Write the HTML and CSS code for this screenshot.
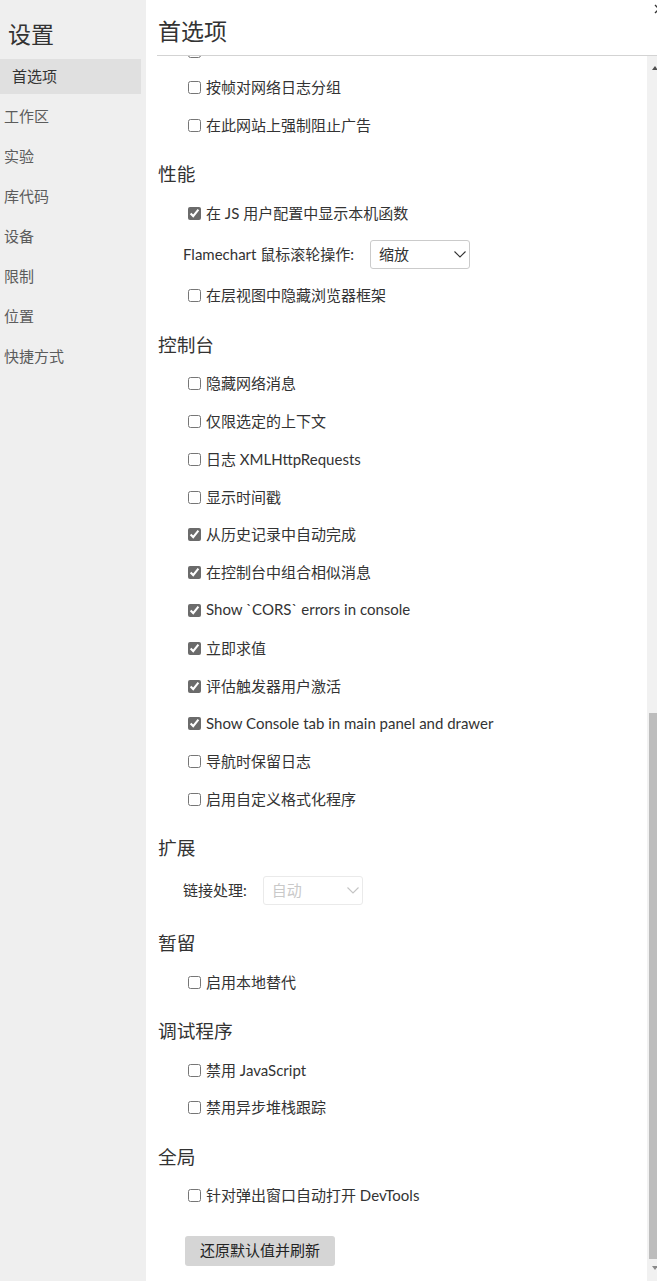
FILE: index.html
```html
<!DOCTYPE html>
<html lang="zh-CN">
<head>
<meta charset="utf-8">
<title>设置 - 首选项</title>
<link rel="stylesheet" href="styles.css">
</head>
<body>
<div class="app">
  <nav class="sidebar">
    <h1 class="sidebar-title">设置</h1>
    <ul class="nav">
      <li class="nav-item selected">首选项</li>
      <li class="nav-item">工作区</li>
      <li class="nav-item">实验</li>
      <li class="nav-item">库代码</li>
      <li class="nav-item">设备</li>
      <li class="nav-item">限制</li>
      <li class="nav-item">位置</li>
      <li class="nav-item">快捷方式</li>
    </ul>
  </nav>
  <main class="panel">
    <header class="panel-header">
      <h2 class="panel-title">首选项</h2>
      <button class="close" aria-label="关闭">
        <svg viewBox="0 0 10 10" width="10" height="10"><path d="M1 1L9 9M9 1L1 9" stroke="#333" stroke-width="1.3" fill="none"/></svg>
      </button>
    </header>
    <div class="panel-body">
      <div class="scroll">
        <div class="content">
          <section class="group">
            <label class="check-row partial"><input type="checkbox" aria-label="记录网络日志"></label>
            <label class="check-row"><input type="checkbox"><span>按帧对网络日志分组</span></label>
            <label class="check-row"><input type="checkbox"><span>在此网站上强制阻止广告</span></label>
          </section>
          <section class="group">
            <h3 class="group-title">性能</h3>
            <label class="check-row"><input type="checkbox" checked><span>在 JS 用户配置中显示本机函数</span></label>
            <div class="select-row">
              <span class="select-label">Flamechart 鼠标滚轮操作:</span>
              <span class="select">
                <select><option>缩放</option><option>滚动</option></select>
                <svg class="chevron" viewBox="0 0 12 7" width="12" height="7"><path d="M0.5 0.5L6 6L11.5 0.5" stroke="#333" stroke-width="1.1" fill="none"/></svg>
              </span>
            </div>
            <label class="check-row"><input type="checkbox"><span>在层视图中隐藏浏览器框架</span></label>
          </section>
          <section class="group">
            <h3 class="group-title">控制台</h3>
            <label class="check-row"><input type="checkbox"><span>隐藏网络消息</span></label>
            <label class="check-row"><input type="checkbox"><span>仅限选定的上下文</span></label>
            <label class="check-row"><input type="checkbox"><span>日志 XMLHttpRequests</span></label>
            <label class="check-row"><input type="checkbox"><span>显示时间戳</span></label>
            <label class="check-row"><input type="checkbox" checked><span>从历史记录中自动完成</span></label>
            <label class="check-row"><input type="checkbox" checked><span>在控制台中组合相似消息</span></label>
            <label class="check-row"><input type="checkbox" checked><span>Show `CORS` errors in console</span></label>
            <label class="check-row"><input type="checkbox" checked><span>立即求值</span></label>
            <label class="check-row"><input type="checkbox" checked><span>评估触发器用户激活</span></label>
            <label class="check-row"><input type="checkbox" checked><span>Show Console tab in main panel and drawer</span></label>
            <label class="check-row"><input type="checkbox"><span>导航时保留日志</span></label>
            <label class="check-row"><input type="checkbox"><span>启用自定义格式化程序</span></label>
          </section>
          <section class="group">
            <h3 class="group-title">扩展</h3>
            <div class="select-row">
              <span class="select-label">链接处理:</span>
              <span class="select disabled">
                <select disabled><option>自动</option></select>
                <svg class="chevron" viewBox="0 0 12 7" width="12" height="7"><path d="M0.5 0.5L6 6L11.5 0.5" stroke="#c4c4c4" stroke-width="1.1" fill="none"/></svg>
              </span>
            </div>
          </section>
          <section class="group">
            <h3 class="group-title">暂留</h3>
            <label class="check-row"><input type="checkbox"><span>启用本地替代</span></label>
          </section>
          <section class="group">
            <h3 class="group-title">调试程序</h3>
            <label class="check-row"><input type="checkbox"><span>禁用 JavaScript</span></label>
            <label class="check-row"><input type="checkbox"><span>禁用异步堆栈跟踪</span></label>
          </section>
          <section class="group">
            <h3 class="group-title">全局</h3>
            <label class="check-row"><input type="checkbox"><span>针对弹出窗口自动打开 DevTools</span></label>
          </section>
          <button class="reset">还原默认值并刷新</button>
        </div>
      </div>
      <div class="scrollbar">
        <div class="sb-button up"><span class="arrow-up"></span></div>
        <div class="sb-track"><div class="sb-thumb"></div></div>
        <div class="sb-button down"><span class="arrow-down"></span></div>
      </div>
    </div>
  </main>
</div>
</body>
</html>
```
FILE: styles.css
```css
html, body {
  margin: 0;
  padding: 0;
  height: 100%;
  overflow: hidden;
  background: #ffffff;
}

body {
  font-family: Lato, "Noto Sans CJK SC", sans-serif;
  font-size: 15px;
  color: #333333;
}

.app {
  display: flex;
  width: 662px;
  height: 1281px;
}

/* Sidebar */
.sidebar {
  flex: none;
  width: 146px;
  background: #efefef;
}

.sidebar-title {
  margin: 19px 0 10px 8px;
  font-size: 23px;
  line-height: 30px;
  font-weight: normal;
  color: #333333;
}

.nav {
  list-style: none;
  margin: 0;
  padding: 0;
}

.nav-item {
  height: 35px;
  line-height: 34px;
  margin: 0 5px 5px 0;
  padding-left: 4px;
  color: #5c5c5c;
}

.nav-item.selected {
  padding-left: 12px;
  background: #e0e0e0;
  color: #333333;
}

/* Panel */
.panel {
  flex: 1;
  display: flex;
  flex-direction: column;
  position: relative;
  min-width: 0;
}

.panel-header {
  flex: none;
  height: 55px;
  margin-left: 11px;
  padding-left: 1px;
  border-bottom: 1px solid #d3d3d3;
  box-sizing: content-box;
}

.panel-title {
  margin: 0;
  padding-top: 16px;
  font-size: 23px;
  line-height: 31px;
  font-weight: normal;
  color: #333333;
}

.close {
  position: absolute;
  top: 4px;
  right: -2px;
  width: 10px;
  height: 10px;
  padding: 0;
  border: none;
  background: none;
  display: flex;
}

.panel-body {
  flex: 1;
  display: flex;
  min-height: 0;
}

.scroll {
  flex: 1;
  overflow: hidden;
}

.content {
  margin-top: -25.2px;
}

.group-title {
  margin: 12px 0 0;
  height: 38px;
  line-height: 37px;
  padding-left: 12px;
  font-size: 18.7px;
  font-weight: normal;
  color: #333333;
}

.check-row {
  display: flex;
  align-items: center;
  height: 37.8px;
  padding-left: 42px;
  color: #333333;
}

.check-row.partial {
  margin-top: 1.5px;
  margin-bottom: -1.5px;
}

.check-row span {
  margin-bottom: 2px;
}

.check-row input {
  margin: 0 5px 0 0;
  width: 13px;
  height: 13px;
  accent-color: #6b6b6b;
  flex: none;
}

.select-row {
  display: flex;
  align-items: center;
  gap: 16px;
  padding: 8px 0 8px 37px;
}

.select-label {
  color: #333333;
  margin-bottom: 2px;
}

.select {
  position: relative;
  display: flex;
}

.select select {
  appearance: none;
  -webkit-appearance: none;
  width: 100px;
  height: 29px;
  margin: 0;
  padding: 0 8px 2px;
  border: 1px solid #cbcbcb;
  border-radius: 3px;
  background: #ffffff;
  font: inherit;
  color: #333333;
}

.select.disabled select {
  border-color: #e2e2e2;
  color: #b3b3b3;
}

.chevron {
  position: absolute;
  right: 4px;
  top: 11px;
  pointer-events: none;
}

.reset {
  display: block;
  margin: 21px 0 0 39px;
  width: 150px;
  height: 30px;
  padding: 0 0 2px;
  border: none;
  border-radius: 3px;
  background: #d5d5d5;
  font: inherit;
  color: #222222;
}

/* Scrollbar */
.scrollbar {
  flex: none;
  width: 15px;
  display: flex;
  flex-direction: column;
  background: #f1f1f1;
}

.sb-button {
  flex: none;
  height: 17px;
  display: flex;
  justify-content: center;
}

.sb-button.up {
  align-items: flex-end;
  padding-bottom: 3px;
  box-sizing: border-box;
}

.sb-button.down {
  align-items: flex-start;
  padding-top: 2px;
  box-sizing: border-box;
}

.arrow-up {
  width: 0;
  height: 0;
  border-left: 3.5px solid transparent;
  border-right: 3.5px solid transparent;
  border-bottom: 4px solid #505050;
}

.arrow-down {
  width: 0;
  height: 0;
  border-left: 3.5px solid transparent;
  border-right: 3.5px solid transparent;
  border-top: 4px solid #8a8a8a;
}

.sb-track {
  flex: 1;
  display: flex;
  flex-direction: column;
  justify-content: flex-end;
}

.sb-thumb {
  height: 546px;
  margin: 0 2px 5px 2px;
  background: #bdbdbd;
}
```
